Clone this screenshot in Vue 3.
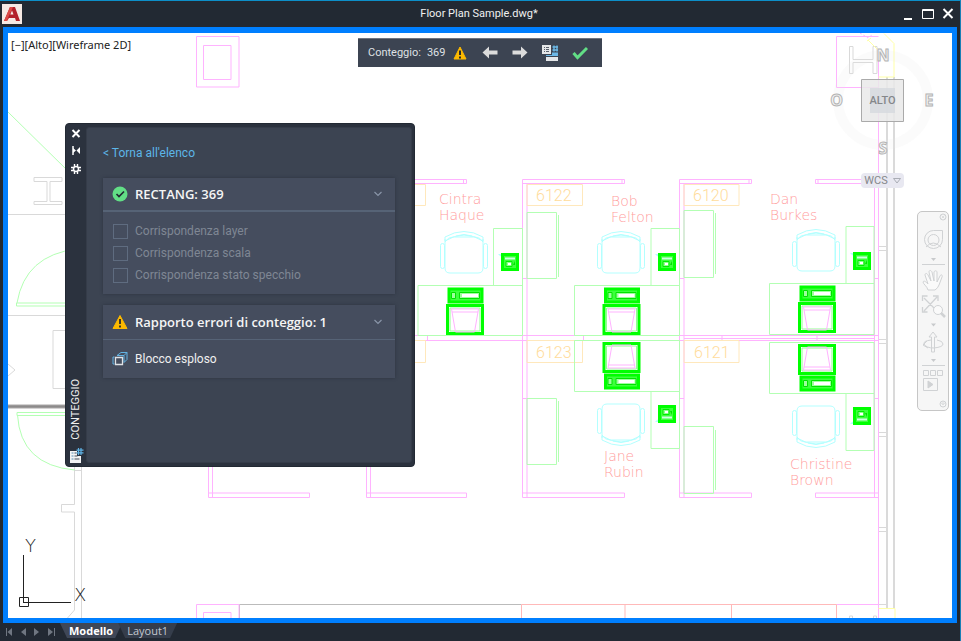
<script setup>
import { ref } from 'vue'

const countOpen = ref(true)
const errorsOpen = ref(true)
const layout = ref('Modello')
const layouts = ['Modello', 'Layout1']
const criteria = ['Corrispondenza layer', 'Corrispondenza scala', 'Corrispondenza stato specchio']

const chairs = [
  { x: 440, y: 231, s: 1 }, { x: 597, y: 231, s: 1 }, { x: 792, y: 229, s: 1 },
  { x: 597, y: 446, s: -1 }, { x: 792, y: 448, s: -1 }
]
const computers = [
  { x: 446, y: 287, s: 1 }, { x: 602.5, y: 287, s: 1 }, { x: 798, y: 285, s: 1 },
  { x: 602.5, y: 390, s: -1 }, { x: 798, y: 392, s: -1 }
]
const phones = [
  { x: 501, y: 253, s: 1 }, { x: 658, y: 253, s: 1 }, { x: 853, y: 252, s: 1 },
  { x: 658, y: 423, s: -1 }, { x: 853, y: 425, s: -1 }
]
const place = (o) => `translate(${o.x} ${o.y}) scale(1 ${o.s})`

const people = [
  { x: 439, y: 204, lines: ['Cintra', 'Haque'] },
  { x: 611, y: 206, lines: ['Bob', 'Felton'] },
  { x: 770, y: 204, lines: ['Dan', 'Burkes'] },
  { x: 604, y: 461, lines: ['Jane', 'Rubin'] },
  { x: 790, y: 469, lines: ['Christine', 'Brown'] }
]
const rooms = [
  { x: 536, y: 201, n: '6122' }, { x: 693, y: 201, n: '6120' },
  { x: 536, y: 358, n: '6123' }, { x: 694, y: 358, n: '6121' }
]
</script>

<template>
  <div class="window">
    <header class="titlebar">
      <svg class="logo" viewBox="0 0 20 20" aria-hidden="true">
        <rect width="20" height="20" fill="#f6e9e4" />
        <path d="M2 17L8 3h5l5 14h-4l-1-3H7l-2 3z" fill="#b3202a" />
        <path d="M8 3h3L6 14l-1 3H2z" fill="#dc4a46" />
        <path d="M8.300 10.500L10 6.500l1.500 4z" fill="#f6e9e4" />
      </svg>
      <h1>Floor Plan Sample.dwg*</h1>
      <div class="winctl">
        <button aria-label="Riduci a icona"><svg viewBox="0 0 12 14"><path d="M2 12h8" stroke="#fff" stroke-width="2" /></svg></button>
        <button aria-label="Ingrandisci"><svg viewBox="0 0 12 14"><path d="M.5 2.500h11v9H.5zM.5 3.500h11" fill="none" stroke="#fff" /></svg></button>
        <button aria-label="Chiudi"><svg viewBox="0 0 12 14"><path d="M1.500 2l9 9M10.500 2l-9 9" fill="none" stroke="#fff" stroke-width="2" /></svg></button>
      </div>
    </header>

    <main class="canvas">
      <svg class="drawing" viewBox="8 33 944 585" preserveAspectRatio="xMinYMin slice" role="img" aria-label="Pianta del piano">
        <defs>
          <g id="chair" fill="none" stroke="#b3ffff">
            <rect x=".5" y="12.500" width="4" height="25" rx="2" />
            <rect x="43.500" y="12.500" width="4" height="25" rx="2" />
            <path d="M5 8v29q0 5 5 5h28q5 0 5-5V8M5 11Q8 6 13 6h22q5 0 8 5M5 6Q24-5 43 6v4Q24-2 5 10zM16 5q8-3 16 0" />
          </g>
          <g id="computer" fill="none">
            <path d="M3 2h33v13H3z" fill="#3dff3d" stroke="#0f0" stroke-width="3" />
            <path d="M5.500 5.500h4v6h-4z" fill="#9dff9d" stroke="#00e400" />
            <path d="M13.500 5.500h20v6h-20z" fill="#9dff9d" stroke="#00e400" />
            <path d="M16 7h16v3H16z" fill="#fff" />
            <path d="M1.500 18.500h35v28h-35z" fill="#fff" stroke="#0f0" stroke-width="3" />
            <path d="M4 21h30v23H4z" stroke="#90ff90" />
            <path d="M5.500 22h27l-4 23H9.500zM6 25h26" stroke="#ffb3ff" />
          </g>
          <g id="phone" fill="none">
            <path d="M-3 1h4v3l-2-1z" fill="#b3ffff" />
            <path d="M1.500 1.500h15v15h-15z" fill="#3dff3d" stroke="#0f0" stroke-width="3" />
            <path d="M4 4.500h10v2H4z" fill="#ccffe0" />
            <path d="M5 8.500h6v5H5z" fill="#8cff8c" stroke="#00ee00" />
            <path d="M7 10h3v2H7z" fill="#fff" />
            <path d="M14 8l-2 4h2z" fill="#00e400" />
          </g>
        </defs>

        <g class="ln grey">
          <path d="M34 177.500h28v4H50v20h12v3H34v-3h13v-20H34zM8 214.500h70M8 315.500h70M53 330.500h30v58H53zM8 364l7 6-7 6" />
          <path d="M74.500 467v37.500h-13v7.500h13v98l-7 8M81.500 467v151M74.500 470.500h7" />
          <path d="M849.500 46.500h3.500v13h20v-13h4v27h-4v-11h-20v11h-3.500z" />
          <path d="M878 246.500h9M878 250.500h9M878 339.500h9M878 343.500h9M878 432.500h9M878 436.500h9M878 527.500h9M878 531.500h9M878 604.500h9" />
          <path d="M849.500 618v-2h3v2M873.500 618v-2h3v2" />
        </g>
        <path class="ln wall" d="M887 77v531M894 77v531" />
        <path d="M8 406.500h60" fill="none" stroke="#aaa8a8" stroke-width="4" />
        <path d="M8 406.500h60" fill="none" stroke="#8c8a8a" stroke-width="2" />
        <path d="M239.500 618v-13.500h282" fill="none" stroke="#bbb" />

        <g class="ln pink">
          <path d="M196.500 36.500H239V87h-42.500zM203.500 45.500H231V79.500h-27.500zM196.500 618v-13.500H239V618M203.500 618v-5.500H231v5.500" />
          <path d="M878.500 36.500h-42v51h42M878.500 58v560M836.500 604.500h42" />
          <path d="M410 179.500h56.500v4H410M522.500 179.500h102v4h-102M679.500 179.500h72v4h-72M878.500 179.500h-63v4h63M463.500 179.500v4M622 179.500v4M749 179.500v4M818 179.500v4" />
          <path d="M522.500 179.500v318M527 184v313M679.500 179.500v318M684 184v313M874.500 184v313" />
          <path d="M208.500 460v37.500h101v-4.500h-101M212.500 460v37.500M366.500 460v37.500h100v-4.500h-100M370.500 460v37.500M522.500 497.500h102v-4.500h-102M679.500 497.500h72v-4.500h-72M878.500 497.500h-63v-4.500h63" />
          <path d="M410 335.500h468M410 340.500h468M684 338.500h190M427.500 336v4M583.500 336v4M722 336v4M817 336v4" />
          <path d="M522.500 278.500h4.500M522.500 398.500h4.500M679.500 278.500h4.500M679.500 398.500h4.500M874.500 278.500h4M874.500 398.500h4" />
        </g>
        <path class="ln red" d="M521.500 618v-13.500h315V618M625 604.500V618M731.500 604.500V618" />
        <path class="ln yellow" d="M867 41l4-3M884 33.500l10 10v33.500h-15.500M868 40l11 11M878.500 608.500h16.500V618" />
        <path class="ln pink" d="M860 33l8 5 4-3" stroke-dasharray="2 2" />

        <g class="ln amber">
          <path d="M410 184.500h15.500v21H410M527 184.500h55.500v21H527zM684 184.500h55v21h-55z" />
          <path d="M410 340.500h15.500v22H410M527 340.500h55.500v22H527zM684 340.500h55v22h-55z" />
        </g>

        <g class="ln green">
          <path d="M8 112l60 59M16.500 303h60v3h-60zM17 303q8-48 60-54M17 412.500h60v3H17zM17.500 415q3 50 57 55" />
          <path d="M493.500 228.500h29v57h-29zM418 285.500h104.500v50H418z" />
          <path d="M651 228.500h28.500v57H651zM574.500 285.500h105v50h-105z" />
          <path d="M846 226.500h28v57h-28zM769.500 283.500h104.500v51H769.500z" />
          <path d="M574.500 340.500h105v51h-105zM651 391.500h28.500v57H651z" />
          <path d="M769.500 342.500h104.500v51H769.500zM846 393.500h28v57h-28z" />
          <path d="M527 212.500h29.500v66H527zM558.500 215v62M527 398.500h29.500v66H527zM558.500 401v61" />
          <path d="M684 210.500h29.500v67H684zM715.500 213v61M684 426.500h29.500v67H684zM715.500 430v60" />
        </g>

        <use v-for="(o, i) in chairs" :key="'c' + i" href="#chair" :transform="place(o)" />
        <use v-for="(o, i) in computers" :key="'k' + i" href="#computer" :transform="place(o)" />
        <use v-for="(o, i) in phones" :key="'p' + i" href="#phone" :transform="place(o)" />

        <text v-for="r in rooms" :key="r.n" class="room" :x="r.x" :y="r.y">{{ r.n }}</text>
        <text v-for="p in people" :key="p.lines[0]" class="person">
          <tspan v-for="(l, i) in p.lines" :key="l" :x="p.x" :y="p.y + i * 16">{{ l }}</tspan>
        </text>

        <g fill="none" stroke="#222">
          <path d="M23.500 555v47M23 602.500h48M19.500 597.500h9v9h-9z" />
          <text class="axis" x="25" y="552">Y</text>
          <text class="axis" x="74" y="601">X</text>
        </g>
      </svg>

      <p class="viewlabel">[−][Alto][Wireframe 2D]</p>

      <div class="counter" role="toolbar" aria-label="Conteggio">
        <span class="counter-text"><span>Conteggio:</span><span>369</span></span>
        <button aria-label="Errori"><svg viewBox="0 0 16 16"><path d="M8 2l6 12H2z" fill="#fcb900" stroke="#fcb900" stroke-linejoin="round" /><path d="M8 5.500v4.500M8 11.500v2" stroke="#2a2a2a" stroke-width="2" /></svg></button>
        <button aria-label="Precedente"><svg viewBox="0 0 16 16"><path d="M.5 7.500L7 1.500v4h8.500v4H7v4z" fill="#dcdcdc" /></svg></button>
        <button aria-label="Successivo"><svg viewBox="0 0 16 16"><path d="M15.500 7.500L9 1.500v4H.5v4H9v4z" fill="#dcdcdc" /></svg></button>
        <button aria-label="Inserisci campo"><svg viewBox="0 0 16 16">
          <path d="M0 0h9v9H0z" fill="#e4e6e8" /><path d="M2 2.500h1M4 2.500h3M2 4.500h1M4 4.500h3M2 6.500h1M4 6.500h3" stroke="#59606c" />
          <path d="M12 .5v6M15 .5v6M10.500 2h6M10.500 5h6" stroke="#6cb8e6" stroke-width="1.400" />
          <path d="M10 7.500h6V11H4v-1h6z" fill="#6cb8e6" /><path d="M4 12h12v4H4z" fill="#e4e6e8" />
        </svg></button>
        <button aria-label="Termina conteggio"><svg viewBox="0 0 16 16"><path d="M1.500 8l4 4.500L15 3" fill="none" stroke="#62de86" stroke-width="3" /></svg></button>
      </div>

      <div class="viewcube">
        <svg viewBox="0 0 110 160" role="group" aria-label="ViewCube">
          <circle cx="55" cy="67" r="45" fill="none" stroke="#e8e8e8" stroke-opacity=".16" stroke-width="10" />
          <path d="M33.500 46.500h42v42h-42z" fill="#e9e9e9" fill-opacity=".85" stroke="#aaa" />
          <path d="M42 55h25v25H42z" fill="#d6d9df" fill-opacity=".8" />
          <text x="54.500" y="71" class="face">ALTO</text>
          <text x="55" y="28" class="compass">N</text>
          <text x="55" y="121" class="compass">S</text>
          <text x="8.500" y="73" class="compass">O</text>
          <text x="101" y="73" class="compass">E</text>
        </svg>
        <button class="wcs">WCS<svg viewBox="0 0 8 6"><path d="M.5.5h7L4 5z" fill="none" stroke="#aaadb5" /></svg></button>
      </div>

      <nav class="navbar" aria-label="Barra di navigazione">
        <svg viewBox="1 1 30 198" fill="none" stroke="#d0d2d4">
          <circle cx="26" cy="6" r="3" /><path d="M24.500 4.500l3 3m0-3l-3 3" stroke-width=".7" />
          <path d="M16.500 19.500h9v9a9 9 0 1 1-9-9z" /><circle cx="16.500" cy="29" r="5.500" /><path d="M9 36q7-8 15 0" />
          <path d="M14 47h5l-2.500 3z" fill="#c8cacc" stroke="none" /><path d="M5 53.500h23M5 154.500h23" />
          <path d="M11 79c-1-4-5-6-5-8 1-2 3 0 5 2l-3-9c0-2 2-2 3 0l3 6-2-9c0-2 2-2 3 0l2 9 0-9c1-2 3-1 3 0v10l3-6c1-2 3-1 2 1l-3 8q-1 3-4 5z" fill="#fafafa" />
          <path d="M7 87l13 13M20 86L7 100M5.500 90v-5h5M16 85h5v5M5.500 96v5h5" stroke-width="1.300" />
          <circle cx="21" cy="99" r="4.500" fill="#fafafa" /><path d="M24 102l4 4" stroke-width="2.500" />
          <path d="M14 112.500h5l-2.500 3z" fill="#c8cacc" stroke="none" />
          <path d="M14.500 141v-15H12l4-5 4 5h-2.500v15zM14 129q-8 1-7 4 2 4 10 4 9-1 9-4 0-3-6-4M10 130l-4 4 5 3" />
          <path d="M14 148h5l-2.500 3z" fill="#c8cacc" stroke="none" />
          <path d="M6.500 159.500h5v5h-5zM13.500 159.500h5v5h-5zM20.500 159.500h5v5h-5zM6.500 167.500h14v12h-14z" />
          <path d="M11 170v7l5-3.500z" fill="#d0d2d4" /><circle cx="26" cy="193" r="3" /><path d="M24.500 192h3l-1.500 2z" stroke-width=".7" />
        </svg>
      </nav>

      <section class="palette" aria-label="Conteggio">
        <div class="rail">
          <button aria-label="Chiudi tavolozza"><svg viewBox="0 0 10 10"><path d="M1.500 1l7 7m0-7l-7 7" stroke="#fff" stroke-width="2" /></svg></button>
          <button aria-label="Nascondi automaticamente"><svg viewBox="0 0 10 10"><path d="M2 0v9" stroke="#fff" stroke-width="1.500" /><path d="M2 2l3 2.500L2 7zM9 1v7L5.500 4.500z" fill="#fff" /></svg></button>
          <button aria-label="Proprietà"><svg viewBox="0 0 10 10"><circle cx="5" cy="5" r="2.500" fill="none" stroke="#fff" stroke-width="1.500" /><path d="M3.500 0v2.500M6.500 0v2.500M3.500 7.500V10M6.500 7.500V10M0 3.500h2.500M0 6.500h2.500M7.500 3.500H10M7.500 6.500H10" stroke="#fff" stroke-width="1.400" /></svg></button>
          <span class="rail-title">CONTEGGIO</span>
          <svg class="rail-icon" viewBox="0 0 15 15" aria-hidden="true">
            <path d="M1 3h7v5h4v7H1z" fill="#f2f3f4" /><path d="M2.500 5h2M2.500 8h2M2.500 11h2" stroke="#5c8fb4" /><path d="M5.500 5h2M5.500 8h3M5.500 11h5" stroke="#444b57" />
            <path d="M9.500 0v7M12 0v7M7.500 2.200h7M7.500 4.800h7" stroke="#5fb3e6" stroke-width="1.200" />
          </svg>
        </div>
        <div class="palette-body">
          <a href="#" class="back" @click.prevent>&lt; Torna all'elenco</a>

          <div class="card">
            <button class="card-head" :aria-expanded="countOpen" @click="countOpen = !countOpen">
              <svg class="ico" viewBox="0 0 16 16"><circle cx="8" cy="8" r="7.500" fill="#62de86" /><path d="M4.500 8l2.500 2.500 5-5" fill="none" stroke="#222933" stroke-width="1.700" /></svg>
              <span>RECTANG: 369</span>
              <svg class="chev" viewBox="0 0 8 6"><path d="M.5 1L4 4.500 7.500 1" fill="none" stroke="#8995a8" stroke-width="1.200" /></svg>
            </button>
            <div v-show="countOpen" class="checks">
              <label v-for="c in criteria" :key="c"><input type="checkbox" disabled />{{ c }}</label>
            </div>
          </div>

          <div class="card">
            <button class="card-head thin" :aria-expanded="errorsOpen" @click="errorsOpen = !errorsOpen">
              <svg class="ico" viewBox="0 0 16 16"><path d="M8 1.500l7 13H1z" fill="#fcb900" stroke="#fcb900" stroke-linejoin="round" /><path d="M8 5v5M8 11.500v2" stroke="#2a2a2a" stroke-width="1.800" /></svg>
              <span>Rapporto errori di conteggio: 1</span>
              <svg class="chev" viewBox="0 0 8 6"><path d="M.5 1L4 4.500 7.500 1" fill="none" stroke="#8995a8" stroke-width="1.200" /></svg>
            </button>
            <button v-show="errorsOpen" class="error-row">
              <svg class="ico" viewBox="0 0 16 16" fill="none" stroke="#62b2e2"><path d="M5 4.500l4-3h6l-3 3zM15 1.500v7l-3 3v-7M2.500 6H1v7h1.500" /><path d="M3.500 6.500h7v7h-7z" stroke="#dfe2e6" stroke-width="1.300" /></svg>
              <span>Blocco esploso</span>
            </button>
          </div>
        </div>
      </section>
    </main>

    <footer class="tabs">
      <div class="steps">
        <button aria-label="Prima scheda"><svg viewBox="0 0 8 10"><path d="M1.500 1v8" stroke="#6f7681" /><path d="M7 1v8L2.500 5z" fill="#6f7681" /></svg></button>
        <button aria-label="Scheda precedente"><svg viewBox="0 0 8 10"><path d="M7 1v8L2 5z" fill="#6f7681" /></svg></button>
        <button aria-label="Scheda successiva"><svg viewBox="0 0 8 10"><path d="M1 1v8l5-4z" fill="#6f7681" /></svg></button>
        <button aria-label="Ultima scheda"><svg viewBox="0 0 8 10"><path d="M7.500 1v8" stroke="#6f7681" /><path d="M1 1v8l5-4z" fill="#6f7681" /></svg></button>
      </div>
      <button v-for="t in layouts" :key="t" class="tab" :class="{ active: layout === t }" @click="layout = t">{{ t }}</button>
    </footer>
  </div>
</template>

<style>
body { background: #222933; }
</style>

<style scoped>
* { box-sizing: border-box; }
.window {
  display: flex;
  flex-direction: column;
  height: 100vh;
  border-top: 1px solid #0d8fc9;
  border-right: 1px solid #1a7fb5;
  background: #222933;
  color: #f0f0f0;
  font: 12px/16px Roboto, "Noto Sans", sans-serif;
}
button {
  display: flex;
  align-items: center;
  justify-content: center;
  padding: 0;
  border: 0;
  background: none;
  color: inherit;
  font: inherit;
}
svg { display: block; }
.titlebar {
  display: grid;
  grid-template-columns: 1fr auto 1fr;
  align-items: center;
  height: 26px;
  padding: 0 4px 0 2px;
}
.logo { width: 20px; height: 20px; }
.titlebar h1 { margin: 0; font-size: 11px; font-weight: 400; }
.winctl { display: flex; justify-content: flex-end; gap: 8px; padding-right: 2px; }
.winctl svg { width: 12px; height: 14px; }
.canvas {
  position: relative;
  flex: 1;
  min-height: 0;
  margin: 0 3px 0 3px;
  border: solid #007fff;
  border-width: 6px 5px 5px;
  background: #fff;
  overflow: hidden;
}
.drawing { position: absolute; inset: 0; width: 100%; height: 100%; }
.ln { fill: none; }
.grey { stroke: #d9d9d9; }
.wall { stroke: #dadada; stroke-width: 2px; }
.pink { stroke: #ffb3ff; }
.red { stroke: #ffb9b9; }
.yellow { stroke: #ffffa6; }
.amber { stroke: #ffe8bc; }
.green { stroke: #b3ffb3; }
.person { fill: #ff9d9d; font: 200 14px "DejaVu Sans Light", "DejaVu Sans", sans-serif; }
.room { fill: #ffdc9c; font: 300 16px Roboto, sans-serif; }
.axis { fill: #222; stroke: none; font: 200 18px "DejaVu Sans Light", "DejaVu Sans", sans-serif; }
.viewlabel {
  position: absolute;
  left: 3px;
  top: 4px;
  margin: 0;
  color: #222;
  font-size: 11px;
  font-family: "Noto Sans", sans-serif;
}
.counter {
  position: absolute;
  top: 5px;
  left: 350px;
  display: flex;
  align-items: center;
  gap: 14px;
  height: 29px;
  padding: 0 14px 0 10px;
  border-top: 1px solid #6f7581;
  background: #3c4452;
  color: #dfe1e5;
  font-size: 11px;
}
.counter-text { display: flex; gap: 6px; margin-right: -7px; }
.counter svg { width: 16px; height: 16px; }
.viewcube { position: absolute; top: 0; right: 14px; width: 110px; }
.viewcube > svg { width: 110px; height: 160px; }
.face { fill: #85878a; font: 500 11px Roboto, sans-serif; text-anchor: middle; }
.compass {
  fill: #f2f2f2;
  stroke: #b4b4b4;
  stroke-width: 1px;
  font: 700 16px "Open Sans", sans-serif;
  text-anchor: middle;
}
.wcs {
  position: absolute;
  top: 140px;
  left: 33px;
  gap: 5px;
  width: 43px;
  height: 15px;
  border-radius: 4px;
  background: #e8e8f1;
  color: #85878a;
  font-size: 11px;
}
.wcs svg { width: 8px; height: 6px; }
.navbar {
  position: absolute;
  top: 178px;
  right: 3px;
  width: 32px;
  border: 1px solid #c6c6c6;
  border-radius: 5px;
  background: #f6f6f6;
}
.navbar svg { width: 30px; height: 198px; }
.palette {
  position: absolute;
  left: 57px;
  top: 90px;
  display: flex;
  width: 350px;
  height: 344px;
  padding: 3px 2px 3px 0;
  border: 1px solid #222933;
  border-radius: 4px;
  background: #2b323e;
}
.rail {
  display: flex;
  flex-direction: column;
  align-items: center;
  width: 20px;
}
.rail button { width: 18px; height: 18px; }
.rail button:first-child { height: 14px; margin-bottom: 1px; }
.rail button svg { width: 10px; height: 10px; }
.rail-title {
  margin-top: auto;
  writing-mode: vertical-rl;
  transform: rotate(180deg);
  font-size: 11px;
}
.rail-icon { width: 15px; height: 15px; margin-top: 8px; }
.palette-body {
  flex: 1;
  display: flex;
  flex-direction: column;
  gap: 11px;
  padding: 17px 16px;
  border: 1px solid #353c49;
  border-radius: 3px;
  background: #3c4452;
}
.back { align-self: flex-start; margin-bottom: 6px; color: #5cb6e8; text-decoration: none; }
.card { background: #454d5e; box-shadow: 0 0 3px #2d3440; }
.card-head {
  width: 100%;
  height: 34px;
  gap: 7px;
  padding: 0 13px 0 9px;
  border-bottom: 2px solid #566376;
  color: #f5f5f5;
  font-family: "Open Sans", sans-serif;
  font-size: 13px;
  font-weight: 600;
}
.card-head.thin { height: 35px; border-bottom-width: 1px; }
.card-head span { flex: 1; text-align: left; }
.ico { width: 16px; height: 16px; }
.chev { width: 8px; height: 6px; }
.checks {
  display: flex;
  flex-direction: column;
  gap: 6px;
  padding: 11px 10px;
  color: #7f8794;
}
.checks label { display: flex; align-items: center; gap: 7px; }
.checks input {
  appearance: none;
  width: 15px;
  height: 15px;
  margin: 0;
  border: 1px solid #5f6c80;
  background: transparent;
}
.error-row {
  justify-content: flex-start;
  width: 100%;
  height: 38px;
  gap: 7px;
  padding: 0 9px;
}
.tabs { display: flex; height: 18px; padding-left: 5px; font-size: 11px; font-family: "Open Sans", sans-serif; }
.steps { display: flex; align-items: center; gap: 6px; width: 55px; }
.steps svg { width: 8px; height: 10px; }
.tab {
  height: 15px;
  padding: 0 9px;
  margin-right: -4px;
  background: #353d4b;
  clip-path: polygon(0 0, 100% 0, calc(100% - 7px) 100%, 7px 100%);
  color: #c4c8cf;
}
.tab.active { background: #3f4757; color: #fff; font-weight: 700; }
</style>
